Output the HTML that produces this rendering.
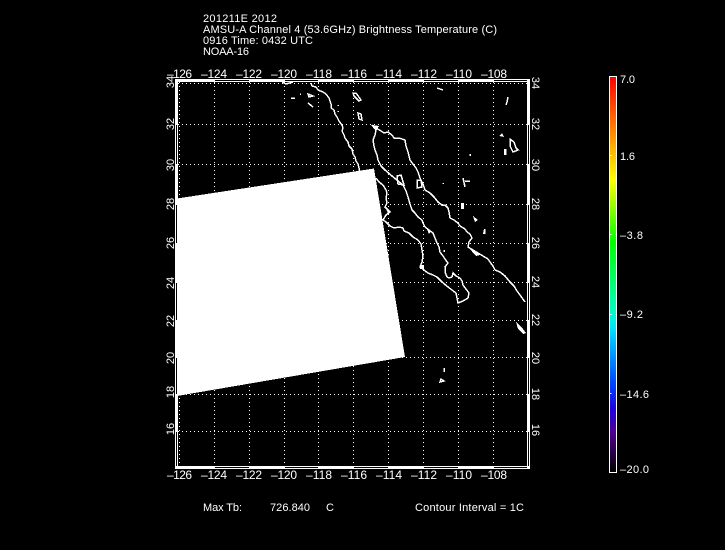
<!DOCTYPE html>
<html>
<head>
<meta charset="utf-8">
<title>AMSU-A Channel 4</title>
<style>
html,body{margin:0;padding:0;background:#000;width:725px;height:550px;overflow:hidden}
svg{display:block}
text{font-family:"Liberation Sans",sans-serif;font-size:11px;fill:#fff}
.a text{font-size:12px}
</style>
</head>
<body>
<svg width="725" height="550" viewBox="0 0 725 550" xmlns="http://www.w3.org/2000/svg">
<defs>
<linearGradient id="cb" gradientUnits="userSpaceOnUse" x1="0" y1="77" x2="0" y2="472">
<stop offset="0" stop-color="#ff0000"/>
<stop offset="0.26" stop-color="#ffff00"/>
<stop offset="0.42" stop-color="#00ff00"/>
<stop offset="0.59" stop-color="#00ffc0"/>
<stop offset="0.63" stop-color="#00e8ff"/>
<stop offset="0.78" stop-color="#0040ff"/>
<stop offset="0.84" stop-color="#2000e0"/>
<stop offset="0.90" stop-color="#500090"/>
<stop offset="1" stop-color="#000000"/>
</linearGradient>
</defs>
<rect width="725" height="550" fill="#000"/>

<!-- header -->
<text x="203" y="22" textLength="74" lengthAdjust="spacing">201211E 2012</text>
<text x="203" y="33" textLength="294" lengthAdjust="spacing">AMSU-A Channel 4 (53.6GHz) Brightness Temperature (C)</text>
<text x="203" y="44" textLength="110" lengthAdjust="spacing">0916 Time: 0432 UTC</text>
<text x="203" y="55" textLength="46" lengthAdjust="spacing">NOAA-16</text>

<!-- grid -->
<g stroke="#fff" stroke-width="1" stroke-dasharray="1 3" fill="none" shape-rendering="crispEdges">
<path d="M179.5 82V466M214.5 82V466M249.5 82V466M284.5 82V466M318.5 82V466M353.5 82V466M388.5 82V466M423.5 82V466M458.5 82V466M493.5 82V466"/>
<path d="M178 83.5H527M178 124.5H527M178 164.5H527M178 204.5H527M178 243.5H527M178 282.5H527M178 320.5H527M178 357.5H527M178 394.5H527M178 431.5H527"/>
</g>

<!-- coast -->
<g stroke="#fff" stroke-width="1.5" fill="none" stroke-linejoin="miter" shape-rendering="crispEdges">
<path d="M311 83L312 86L316 87L318 90L323 92L326 94L329 98L330 101L331 104L331 108L334 110L335 114L337 117L339 121L342 125L343 128L342 131L344 135L345 138L348 142L349 146L352 149L353 154L355 157L356 161L358 164L359 168L359 172"/>
<path d="M376 178L379 182L383 185L386 190L387 193L386 198L387 203L385 207L390 212L386 215L383 220L386 222L390 226L394 228L399 227L403 228L404 231L409 233L413 237L418 240L421 244L422 250L423 256L422 262L420 267L424 270L428 273L433 275L437 277L442 282L448 287L452 290L456 293L457 298L458 303L463 301L468 298L469 293L466 289L463 285L462 281L460 278L456 276L453 273L452 277L449 278L447 277L445 272L445 267L448 263L445 259L443 256L440 252L439 247L437 243L435 238L433 233L429 230L425 227L423 223L422 220L418 217L415 213L412 210L410 204L408 197L406 191L403 185L398 181L392 176L385 170L381 166L378 160L377 155L375 150L374 146L373 140L375 135L376 130L372 125"/>
<path d="M376 128L381 131L384 133L388 132L392 135L394 138L399 138L405 140L406 146L408 152L410 160L413 164L416 168L418 172L420 178L423 184L425 190L430 193L434 197L438 202L442 205L445 205L448 208L449 212L450 218L454 220L458 223L460 226L465 229L467 232L470 234L472 238L469 242L468 247L473 250L478 253L483 256L488 259L490 262L493 266L495 270L500 272L505 276L510 282L514 286L517 291L520 295L525 302"/>
<path d="M397 176L401 175L404 185L398 184ZM417 180L421 180L422 187L417 188Z"/>
<path d="M353 93L356 93L361 100L359 101L354 96Z"/>
<path d="M358 113L361 114L362 120L359 119Z"/>
<path d="M291 98H295M300 94H301M308 94L313 96L309 97ZM308 103L313 107M338 105V106M338 111V112"/>
<path d="M282 82L286 84L293 82"/>
<path d="M437 88L443 90M508 97L507 102L506 105"/>
<path d="M510 139L514 142L516 148L518 150L513 152L510 146Z"/>
<path d="M463 178L465 187M465 181L470 181M443 183V184M470 154V156M444 368V372M441 379L444 381L440 382Z"/>
<path d="M444 250V252"/>
</g>
<g fill="#fff" shape-rendering="crispEdges">
<path d="M372 125L379 126L376 131Z"/>
<path d="M499 136L502 133L504 137Z"/>
<rect x="504" y="149" width="2.5" height="6"/>
<rect x="461" y="203" width="3" height="6"/>
<path d="M473 216L478 220L475 222Z"/>
<path d="M484 229H485.5V234H483Z"/>
<path d="M516 322L523 329L526 333L523 334L518 329Z"/>
<rect x="420" y="265" width="4" height="4"/>
<path d="M426 227L431 231L429 234Z"/>
<path d="M468 247L480 255L476 256Z"/>
<path d="M385 207L391 212L388 213Z"/>
</g>

<!-- swath -->
<polygon points="177,198.5 374,168.5 405,357 177,396" fill="#fff" shape-rendering="crispEdges"/>

<!-- frame -->
<g fill="#fff" shape-rendering="crispEdges">
<path fill-rule="evenodd" d="M175 79H530V469H175ZM178 82V466H527V82Z"/>
</g>
<g fill="#000" shape-rendering="crispEdges">
<rect x="215" y="80" width="34" height="1"/><rect x="285" y="80" width="33" height="1"/><rect x="354" y="80" width="34" height="1"/><rect x="424" y="80" width="34" height="1"/><rect x="494" y="80" width="33" height="1"/>
<rect x="215" y="467" width="34" height="1"/><rect x="285" y="467" width="33" height="1"/><rect x="354" y="467" width="34" height="1"/><rect x="424" y="467" width="34" height="1"/><rect x="494" y="467" width="33" height="1"/>
<rect x="176" y="125" width="1" height="39"/><rect x="176" y="205" width="1" height="38"/><rect x="176" y="283" width="1" height="37"/><rect x="176" y="358" width="1" height="36"/><rect x="176" y="432" width="1" height="34"/>
<rect x="528" y="125" width="1" height="39"/><rect x="528" y="205" width="1" height="38"/><rect x="528" y="283" width="1" height="37"/><rect x="528" y="358" width="1" height="36"/><rect x="528" y="432" width="1" height="34"/>
</g>

<!-- top labels -->
<g class="a">
<text x="167" y="78" textLength="25" lengthAdjust="spacing">–126</text>
<text x="201" y="78" textLength="26" lengthAdjust="spacing">–124</text>
<text x="236" y="78" textLength="26" lengthAdjust="spacing">–122</text>
<text x="271" y="78" textLength="26" lengthAdjust="spacing">–120</text>
<text x="306" y="78" textLength="26" lengthAdjust="spacing">–118</text>
<text x="341" y="78" textLength="26" lengthAdjust="spacing">–116</text>
<text x="376" y="78" textLength="26" lengthAdjust="spacing">–114</text>
<text x="411" y="78" textLength="26" lengthAdjust="spacing">–112</text>
<text x="446" y="78" textLength="26" lengthAdjust="spacing">–110</text>
<text x="481" y="78" textLength="26" lengthAdjust="spacing">–108</text>
</g>
<!-- bottom labels -->
<g class="a">
<text x="167" y="479" textLength="25" lengthAdjust="spacing">–126</text>
<text x="201" y="479" textLength="26" lengthAdjust="spacing">–124</text>
<text x="236" y="479" textLength="26" lengthAdjust="spacing">–122</text>
<text x="271" y="479" textLength="26" lengthAdjust="spacing">–120</text>
<text x="306" y="479" textLength="26" lengthAdjust="spacing">–118</text>
<text x="341" y="479" textLength="26" lengthAdjust="spacing">–116</text>
<text x="376" y="479" textLength="26" lengthAdjust="spacing">–114</text>
<text x="411" y="479" textLength="26" lengthAdjust="spacing">–112</text>
<text x="446" y="479" textLength="26" lengthAdjust="spacing">–110</text>
<text x="481" y="479" textLength="26" lengthAdjust="spacing">–108</text>
</g>
<!-- left labels -->
<g text-anchor="middle">
<text transform="translate(174 82) rotate(-90)">34</text>
<text transform="translate(174 124) rotate(-90)">32</text>
<text transform="translate(174 165) rotate(-90)">30</text>
<text transform="translate(174 204) rotate(-90)">28</text>
<text transform="translate(174 243) rotate(-90)">26</text>
<text transform="translate(174 283) rotate(-90)">24</text>
<text transform="translate(174 321) rotate(-90)">22</text>
<text transform="translate(174 358) rotate(-90)">20</text>
<text transform="translate(174 392) rotate(-90)">18</text>
<text transform="translate(174 429) rotate(-90)">16</text>
</g>
<!-- right labels -->
<g text-anchor="middle">
<text transform="translate(532 83) rotate(90)">34</text>
<text transform="translate(532 124) rotate(90)">32</text>
<text transform="translate(532 165) rotate(90)">30</text>
<text transform="translate(532 204) rotate(90)">28</text>
<text transform="translate(532 243) rotate(90)">26</text>
<text transform="translate(532 282) rotate(90)">24</text>
<text transform="translate(532 320) rotate(90)">22</text>
<text transform="translate(532 358) rotate(90)">20</text>
<text transform="translate(532 394) rotate(90)">18</text>
<text transform="translate(532 430) rotate(90)">16</text>
</g>

<!-- colour bar -->
<rect x="610" y="77" width="6" height="395" fill="url(#cb)" shape-rendering="crispEdges"/>
<rect x="609.5" y="76.5" width="7" height="396" fill="none" stroke="#fff" stroke-width="1" shape-rendering="crispEdges"/>
<g fill="#fff" shape-rendering="crispEdges">
<rect x="610" y="155" width="1.5" height="1"/><rect x="610" y="234" width="1.5" height="1"/><rect x="610" y="314" width="1.5" height="1"/><rect x="610" y="393" width="1.5" height="1"/>
</g>
<text x="620" y="83" textLength="15" lengthAdjust="spacing">7.0</text>
<text x="620" y="160" textLength="15" lengthAdjust="spacing">1.6</text>
<text x="620" y="239" textLength="23" lengthAdjust="spacing">–3.8</text>
<text x="620" y="318" textLength="23" lengthAdjust="spacing">–9.2</text>
<text x="620" y="398" textLength="29" lengthAdjust="spacing">–14.6</text>
<text x="620" y="473" textLength="29" lengthAdjust="spacing">–20.0</text>

<!-- footer -->
<text x="203" y="511" textLength="39" lengthAdjust="spacing">Max Tb:</text>
<text x="270" y="511" textLength="40" lengthAdjust="spacing">726.840</text>
<text x="326" y="511" textLength="7" lengthAdjust="spacing">C</text>
<text x="415" y="511" textLength="109" lengthAdjust="spacing">Contour Interval = 1C</text>
</svg>
</body>
</html>
